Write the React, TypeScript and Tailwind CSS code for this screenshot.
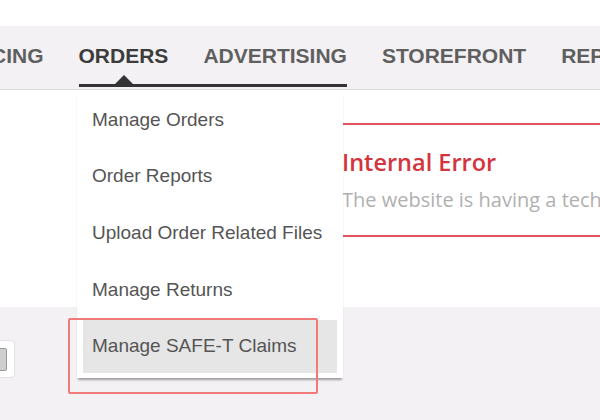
import React from 'react';

const navFont = { fontFamily: '"Liberation Sans", Arial, sans-serif' };
const errFont = { fontFamily: '"Open Sans", "Noto Sans", sans-serif' };

const menuItems = [
  'Manage Orders',
  'Order Reports',
  'Upload Order Related Files',
  'Manage Returns',
  'Manage SAFE-T Claims',
];

function NavBar() {
  return (
    <div
      className="flex h-[64px] items-stretch gap-[35px] border-b border-[#dcdcdc] bg-[#f4f1f4] text-[21px] font-bold leading-[24px] text-[#5f5f5f]"
      style={navFont}
    >
      <div className="-ml-[44px] pt-[18px]">PRICING</div>
      <div className="relative flex h-[61px] gap-[35px] border-b-[3px] border-[#333]">
        <div className="pt-[18px] text-[#3c3c3c]">ORDERS</div>
        <div className="pt-[18px]">ADVERTISING</div>
        {/* active caret */}
        <div className="absolute bottom-0 left-[36px] h-0 w-0 border-x-[9px] border-b-[9px] border-x-transparent border-b-[#333]" />
      </div>
      <div className="pt-[18px]">STOREFRONT</div>
      <div className="pt-[18px]">REPORTS</div>
    </div>
  );
}

function ErrorBox() {
  return (
    <div className="min-w-0 flex-1 overflow-hidden pt-[33px]" style={errFont}>
      <div className="h-[2px] bg-[#e0555b]" />
      <div className="mt-[22px] whitespace-nowrap text-[23.5px] font-semibold leading-[30px] text-[#d4343e]">
        Internal Error
      </div>
      <div className="mt-[10px] whitespace-nowrap text-[20px] leading-[26px] text-[#b0b0b0]">
        The website is having a technical problem. Please try again later.
      </div>
      <div className="mt-[22px] h-[2px] bg-[#e0555b]" />
    </div>
  );
}

function OrdersMenu() {
  return (
    <div
      className="absolute left-[77px] top-[90px] flex w-[266px] flex-col gap-[3.6px] bg-white px-[6px] pb-[5px] pt-[3.5px] shadow-[0_3px_2px_-1px_rgba(0,0,0,0.35)]"
      style={navFont}
    >
      {menuItems.map((label, i) => (
        <div
          key={label}
          className={
            'flex h-[53px] items-center pl-[9px] text-[19px] text-[#555] ' +
            (i === menuItems.length - 1 ? 'bg-[#e6e6e6]' : '')
          }
        >
          {label}
        </div>
      ))}
    </div>
  );
}

export default function App() {
  return (
    <div className="relative flex h-[420px] w-[600px] flex-col overflow-hidden bg-white">
      <div className="h-[26px] shrink-0" />
      <NavBar />
      <div className="flex h-[217px] shrink-0">
        <div className="w-[342px] shrink-0" />
        <ErrorBox />
      </div>
      <div className="flex-1 bg-[#f4f1f4] pt-[33px]">
        <div className="-ml-[20px] flex h-[38px] w-[35px] items-center rounded-[4px] border border-[#e2e2e2] bg-white">
          <div className="ml-[6px] h-[23px] w-[20px] rounded-[2px] border border-[#999] bg-[#cfcfcf]" />
        </div>
      </div>

      <OrdersMenu />

      {/* highlight annotation */}
      <div className="absolute left-[68px] top-[318px] h-[76px] w-[250px] rounded-[2px] border-2 border-[#f07a7a]" />
    </div>
  );
}
